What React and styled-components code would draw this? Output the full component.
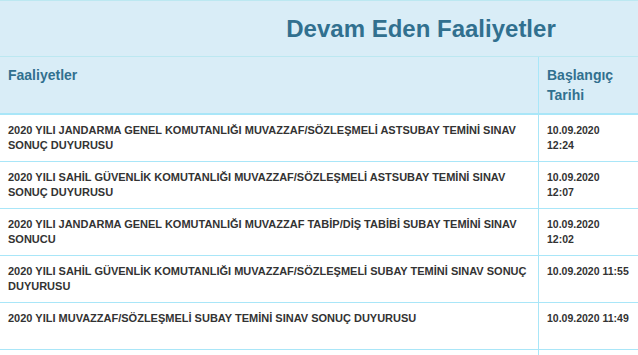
import React from "react";
import styled, { createGlobalStyle } from "styled-components";

const Global = createGlobalStyle`
  html, body { margin: 0; padding: 0; background: #fff; }
  body { font-family: "Liberation Sans", Arial, sans-serif; overflow: hidden; }
  #root { width: 638px; height: 355px; overflow: hidden; }
`;

const Panel = styled.div`
  width: 842px;
  border-top: 1px solid #bce8f1;
`;

const TitleBar = styled.div`
  background: #d9edf7;
  height: 55px;
  display: flex;
  align-items: center;
  justify-content: center;
  border-bottom: 1px solid #bce8f1;
`;

const Title = styled.h3`
  margin: 0;
  font-size: 24px;
  font-weight: bold;
  color: #31708f;
  line-height: 26px;
`;

const Table = styled.table`
  width: 100%;
  border-collapse: collapse;
  table-layout: fixed;
`;

const HeadRow = styled.tr`
  background: #d9edf7;
`;

const Th = styled.th`
  text-align: left;
  vertical-align: top;
  padding: 8px;
  font-size: 14px;
  line-height: 20px;
  font-weight: bold;
  color: #31708f;
  border-bottom: 2px solid #a9e6f8;
  border-left: ${(p) => (p.$divider ? "1px solid #a9e6f8" : "none")};
  width: ${(p) => p.$w || "auto"};
`;

const Row = styled.tr`
  height: 47px;
`;

const Td = styled.td`
  vertical-align: top;
  padding: 8px;
  font-size: ${(p) => (p.$date ? "10.5px" : "11px")};
  line-height: 15px;
  font-weight: bold;
  color: #333;
  border-bottom: 1px solid #a9e6f8;
  border-left: ${(p) => (p.$date ? "1px solid #a9e6f8" : "none")};
`;

const rows = [
  ["2020 YILI JANDARMA GENEL KOMUTANLIĞI MUVAZZAF/SÖZLEŞMELİ ASTSUBAY TEMİNİ SINAV SONUÇ DUYURUSU", ["10.09.2020", "12:24"]],
  ["2020 YILI SAHİL GÜVENLİK KOMUTANLIĞI MUVAZZAF/SÖZLEŞMELİ ASTSUBAY TEMİNİ SINAV SONUÇ DUYURUSU", ["10.09.2020", "12:07"]],
  ["2020 YILI JANDARMA GENEL KOMUTANLIĞI MUVAZZAF TABİP/DİŞ TABİBİ SUBAY TEMİNİ SINAV SONUCU", ["10.09.2020", "12:02"]],
  ["2020 YILI SAHİL GÜVENLİK KOMUTANLIĞI MUVAZZAF/SÖZLEŞMELİ SUBAY TEMİNİ SINAV SONUÇ DUYURUSU", ["10.09.2020 11:55"]],
  ["2020 YILI MUVAZZAF/SÖZLEŞMELİ SUBAY TEMİNİ SINAV SONUÇ DUYURUSU", ["10.09.2020 11:49"]],
  ["", [""]],
];

export default function App() {
  return (
    <>
      <Global />
      <Panel>
        <TitleBar>
          <Title>Devam Eden Faaliyetler</Title>
        </TitleBar>
        <Table>
          <thead>
            <HeadRow>
              <Th $w="522px">Faaliyetler</Th>
              <Th $divider>
                Başlangıç
                <br />
                Tarihi
              </Th>
            </HeadRow>
          </thead>
          <tbody>
            {rows.map(([name, date], i) => (
              <Row key={i}>
                <Td>{name}</Td>
                <Td $date>
                  {date.map((d, j) => (
                    <React.Fragment key={j}>
                      {j > 0 && <br />}
                      {d}
                    </React.Fragment>
                  ))}
                </Td>
              </Row>
            ))}
          </tbody>
        </Table>
      </Panel>
    </>
  );
}
